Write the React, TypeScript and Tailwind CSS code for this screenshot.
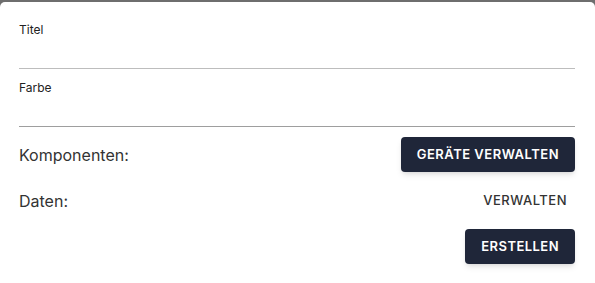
import React from 'react';

const Field = ({ label, darker }: { label: string; darker?: boolean }) => (
  <div className={`pt-[12px] border-b ${darker ? 'border-[#9e9e9e]' : 'border-[#bdbdbd]'}`}>
    <label className="block text-[12px] leading-[14px] text-[#222]">{label}</label>
    <input className="block w-full h-[31px] outline-none bg-transparent text-[14px]" />
  </div>
);

export default function App() {
  return (
    <div className="h-[283px] bg-[#6e6e6e] pt-[2px] overflow-hidden" style={{ fontFamily: 'Inter, "Noto Sans", sans-serif' }}>
      <div className="h-[290px] bg-white rounded-t-[5px] pl-[19px] pr-[20px] pt-[9px]">
        <Field label="Titel" />
        <Field label="Farbe" darker />

        <div className="mt-[10px] flex flex-col gap-[11px]">
          <div className="flex items-center justify-between h-[35px]">
            <span className="text-[16px] text-[#333]">Komponenten:</span>
            <button className="h-[35px] px-[16px] rounded-[4px] bg-[#1f2639] text-white text-[13px] font-semibold tracking-[0.5px] shadow-md">
              GERÄTE VERWALTEN
            </button>
          </div>
          <div className="flex items-center justify-between h-[35px]">
            <span className="text-[16px] text-[#333]">Daten:</span>
            <button className="h-[35px] px-[8px] rounded-[4px] text-[#333] text-[13px] font-medium tracking-[0.5px]">
              VERWALTEN
            </button>
          </div>
          <div className="flex justify-end">
            <button className="h-[35px] px-[16px] rounded-[4px] bg-[#1f2639] text-white text-[13px] font-semibold tracking-[0.45px] shadow-md">
              ERSTELLEN
            </button>
          </div>
        </div>
      </div>
    </div>
  );
}
